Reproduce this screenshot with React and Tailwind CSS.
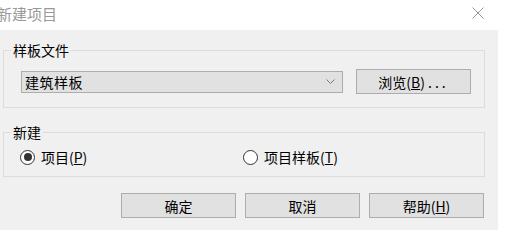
import React from "react";

const font = { fontFamily: '"Noto Sans CJK SC", "Liberation Sans", sans-serif' };

function Radio({ checked, children }) {
  return (
    <label className="flex items-center gap-[6px] h-[20px]">
      <span className="w-[15px] h-[15px] rounded-full border border-[#333333] bg-white flex items-center justify-center">
        {checked && <span className="w-[8px] h-[8px] rounded-full bg-[#333333]" />}
      </span>
      <span className="text-[14px] leading-[20px] text-black">{children}</span>
    </label>
  );
}

function Btn({ children, className = "" }) {
  return (
    <button className={"w-[115px] h-[25px] bg-[#e1e1e1] border border-[#adadad] text-[14px] leading-[20px] text-black flex items-center justify-center " + className}>
      {children}
    </button>
  );
}

export default function App() {
  return (
    <div className="w-[510px] h-[251px] bg-white overflow-hidden" style={font}>
      <div className="h-[30px] flex items-center justify-between pr-[26px]">
        <span className="ml-[-3px] mt-[-3px] text-[15px] leading-[20px] text-[#999999]">新建项目</span>
        <svg width="12" height="12" viewBox="0 0 12 12" className="mt-[-5px]">
          <path d="M0.5 0.5 L11.5 11.5 M11.5 0.5 L0.5 11.5" stroke="#9a9a9a" strokeWidth="1" fill="none" />
        </svg>
      </div>
      <div className="w-[498px] h-[200px] bg-[#f0f0f0] pl-[3px] pr-[13px] pt-[10px] flex flex-col">
        <fieldset className="border border-[#dcdcdc] m-0 p-0">
          <legend className="ml-[7px] px-[2px] text-[14px] leading-[20px] text-black">样板文件</legend>
          <div className="flex items-center pl-[17px] pr-[13px] pt-[9px] pb-[13px]">
            <div className="w-[322px] h-[22px] bg-[#e1e1e1] border border-[#adadad] flex items-center justify-between pl-[3px] pr-[7px]">
              <span className="text-[14px] leading-[20px] text-black tracking-[0.5px]">建筑样板</span>
              <svg width="9" height="5" viewBox="0 0 9 5">
                <path d="M0.5 0.5 L4.5 4.5 L8.5 0.5" stroke="#777777" strokeWidth="1" fill="none" />
              </svg>
            </div>
            <Btn className="ml-[13px]">
              浏览(<span className="underline">B</span>)<span className="tracking-[3px] ml-[3px]">...</span>
            </Btn>
          </div>
        </fieldset>
        <fieldset className="border border-[#dcdcdc] m-0 p-0 mt-[14px]">
          <legend className="ml-[7px] px-[2px] text-[14px] leading-[20px] text-black">新建</legend>
          <div className="flex items-center pl-[16px] pt-[5px] pb-[9px]">
            <div className="w-[223px]">
              <Radio checked>
                项目(<span className="underline">P</span>)
              </Radio>
            </div>
            <Radio>
              项目样板(<span className="underline">T</span>)
            </Radio>
          </div>
        </fieldset>
        <div className="flex justify-end gap-[9px] mt-[16px] pr-[1px]">
          <Btn>确定</Btn>
          <Btn>取消</Btn>
          <Btn>
            帮助(<span className="underline">H</span>)
          </Btn>
        </div>
      </div>
    </div>
  );
}
